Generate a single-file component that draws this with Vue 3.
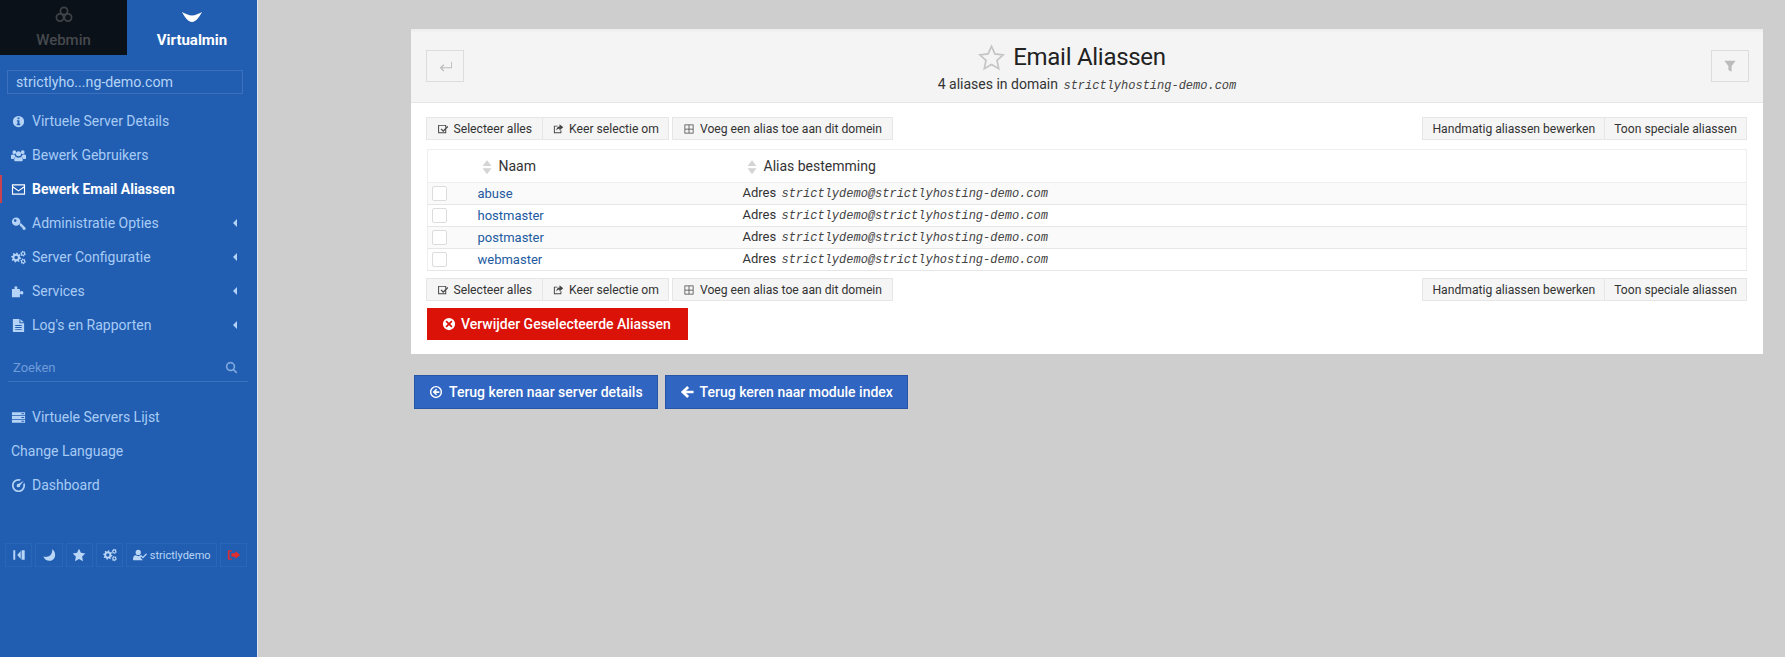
<script setup>
function gear(cx, cy, r, hole, teeth) {
  const n = teeth * 4
  const pts = []
  for (let k = 0; k < n; k++) {
    const a = (k / n) * Math.PI * 2 + Math.PI / n
    const rr = k % 4 < 2 ? r : r * 0.74
    pts.push((cx + rr * Math.cos(a)).toFixed(2) + ' ' + (cy + rr * Math.sin(a)).toFixed(2))
  }
  return 'M' + pts.join('L') + 'Z' +
    `M${cx - hole} ${cy}a${hole} ${hole} 0 1 0 ${hole * 2} 0a${hole} ${hole} 0 1 0 ${-hole * 2} 0Z`
}
const cogs = gear(5.5, 8, 5.4, 1.9, 8) + gear(12.9, 3.9, 3, 1.1, 6) + gear(12.9, 12.1, 3, 1.1, 6)
const P = {
  info: 'M8 2a6 6 0 1 0 0 12A6 6 0 0 0 8 2zM7 3.800h2v1.900H7zM6.300 6.600h2.700v3.900h.9v1.500H6.100v-1.500H7V8.100h-.7z',
  users: 'M3.500 2.500a2 2 0 1 1 0 4 2 2 0 0 1 0-4zM12.500 2.500a2 2 0 1 1 0 4 2 2 0 0 1 0-4zM8 3.500a2.700 2.700 0 1 1 0 5.400 2.700 2.700 0 0 1 0-5.400zM0 8.200C0 7.300 1 7 3.700 7c.3 1 .8 1.700 1.400 2.200C3.700 9.700 3 10.800 3 11.800H1c-.7 0-1-.4-1-1zM16 8.200c0-.9-1-1.200-3.700-1.200-.3 1-.8 1.700-1.400 2.200 1.400.5 2.100 1.600 2.100 2.600h2c.7 0 1-.4 1-1zM5.400 9.500c.7.500 1.600.8 2.600.8s1.900-.3 2.600-.8c1.500.3 2 1.500 2 3.200 0 1-.6 1.500-1.400 1.500H4.800c-.8 0-1.400-.5-1.400-1.500 0-1.700.5-2.900 2-3.200z',
  mail: 'M1 2.500h14v11H1zM2.200 6v6.300h11.600V6L8 10.200zM2.200 3.700v.8L8 8.800l5.800-4.300v-.8z',
  key: 'M5.500 1.500a4.500 4.500 0 1 1 0 9 4.500 4.500 0 0 1 0-9zM4.500 3.500a1.400 1.400 0 1 0 0 2.800 1.400 1.400 0 0 0 0-2.800zM9.200 8.700l1.200-1.200 5.100 5.100v2H13l-.8-.8.2-1.300-1.300-.2-.2-1.300-1.300-.2z',
  cogs,
  puzzle: 'M5 2.500c1.600 0 2.200 1 1.700 2-.3.500-.1.800.4.800h2.400v2.500c0 .5.400.7.800.3.900-.8 2.300-.7 2.700.4.200.6.200 1.200 0 1.800-.4 1.100-1.800 1.200-2.700.4-.4-.4-.8-.2-.8.3V14H1V5.300h2.400c.5 0 .7-.3.4-.8-.5-1 .2-2 1.200-2z',
  file: 'M2 1h7v4.500h5V15H2zM10 1.200L13.800 4.500H10zM4.500 7.500v1h7v-1zM4.500 9.700v1h7v-1zM4.500 11.900v1h7v-1z',
  search: 'M6.800 1a5.800 5.800 0 0 1 4.700 9.200l3.700 3.700-1.400 1.400-3.700-3.700A5.800 5.800 0 1 1 6.800 1zM6.800 3a3.800 3.800 0 1 0 0 7.600 3.800 3.800 0 0 0 0-7.600z',
  server: 'M1 2.500h14v3H1zM1 6.500h14v3H1zM1 10.500h14v3H1zM11 3.500v1h3v-1zM11 7.500v1h3v-1zM11 11.500v1h3v-1z',
  gauge: 'M8 1a7 7 0 1 0 7 7c0-1-.2-1.900-.6-2.700l-1.400 1.400c.1.400.2.800.2 1.300a5.200 5.200 0 1 1-5.200-5.200c.5 0 .9.100 1.300.2l1.400-1.400C9.900 1.200 9 1 8 1zM13.800 2.800L8.300 6.200a1.900 1.900 0 1 0 1.500 1.500z',
  cols: 'M1.500 2.500h2.200v11H1.500zM6 8l4-4.500v9zM11 2.500h3.500v11H11z',
  moon: 'M11.500 1.500c.8 4.200-1.500 8-6.200 8.600-1.300.2-2.700 0-3.800-.5 1.100 3 3.800 5 7 5 3.800 0 6.500-3 6.500-6.700 0-2.800-1.300-5-3.500-6.400z',
  star: 'M8 .8l2.200 4.700 5 .7-3.600 3.600.9 5.200L8 12.500 3.500 15l.9-5.200L.8 6.200l5-.7z',
  usercheck: 'M6 2a3 3 0 1 1 0 6 3 3 0 0 1 0-6zM1 14c-.6 0-1-.4-1-1 0-2.500 1-4.600 3.300-4.600.8.600 1.700.9 2.700.9s1.900-.3 2.700-.9c.5 0 1 .1 1.400.3L8.500 11l2.800 3zM15 6l1 1-4.700 5L8.800 9.500l1-1 1.500 1.500z',
  signout: 'M5.500 2.500H2.500C1.500 2.500 1 3.200 1 4v8c0 .8.500 1.500 1.500 1.500h3V12H2.800V4h2.700zM9.500 3.500L15 8l-5.500 4.500V10H5V6h4.500z',
  checkbox: 'M1.500 2.500h10.800v2.700l-1.300 1.300V3.800H2.800v8.400H11V9.300l1.300-1.300v5.500H1.500zM13.800 4l1.200 1.200-6.700 6.700-3.500-3.500 1.200-1.200 2.300 2.300z',
  share: 'M2.500 3.500h5v1.300H3.800v7.400h7.400V9.800h1.300v3.700h-10zM10 1.500L15 5.800l-5 4.200V7.700c-2 0-3.500.7-4.300 2.500 0-3.200 1.700-5.700 4.300-5.700z',
  plus: 'M2 2h12v12H2zM3 3v4.500h4.500V3zM8.500 3v4.500H13V3zM3 8.500V13h4.500V8.500zM8.500 8.500V13H13V8.500z',
  xcircle: 'M8 1a7 7 0 1 0 0 14A7 7 0 0 0 8 1zM5.400 4L8 6.600 10.600 4 12 5.400 9.400 8l2.600 2.600L10.600 12 8 9.400 5.400 12 4 10.600 6.600 8 4 5.400z',
  backc: 'M8 1a7 7 0 1 0 0 14A7 7 0 0 0 8 1zM8 2.700a5.300 5.300 0 1 1 0 10.600A5.300 5.300 0 0 1 8 2.700zM8 4.200L4.200 8 8 11.800 9.300 10.500 7.800 9H11.800V7H7.800l1.500-1.500z',
  left: 'M8.200 1.200L10.400 3.400 7 6.500H15.500v3H7l3.400 3.100-2.200 2.200L1 8z',
  filter: 'M1.500 2h13L9.800 8v6.500L6.200 12.500V8z',
  enter: 'M15 3v6.300H4.800l2.400-2.300-1-1L2 10l4.200 4.200 1-1-2.400-2.500H16V3z'
}
const menu = [
  { t: 'Virtuele Server Details', i: 'info' },
  { t: 'Bewerk Gebruikers', i: 'users' },
  { t: 'Bewerk Email Aliassen', i: 'mail', active: true },
  { t: 'Administratie Opties', i: 'key', more: true },
  { t: 'Server Configuratie', i: 'cogs', more: true },
  { t: 'Services', i: 'puzzle', more: true },
  { t: "Log's en Rapporten", i: 'file', more: true }
]
const lower = [
  { t: 'Virtuele Servers Lijst', i: 'server' },
  { t: 'Change Language' },
  { t: 'Dashboard', i: 'gauge' }
]
const rows = ['abuse', 'hostmaster', 'postmaster', 'webmaster']
const dest = 'strictlydemo@strictlyhosting-demo.com'
</script>

<template>
  <div class="page">
    <aside class="side">
      <div class="tabs">
        <div class="tab dark">
          <svg class="tabicon" viewBox="0 0 18 18"><g fill="none" stroke="#3f4348" stroke-width="1.700"><circle cx="9" cy="5" r="3.600"/><circle cx="5" cy="11.500" r="3.600"/><circle cx="13" cy="11.500" r="3.600"/></g></svg>
          <span>Webmin</span>
        </div>
        <div class="tab on">
          <svg class="chev" viewBox="0 0 20 10"><path fill="#fff" d="M0 0c3 1.500 7 3.500 10 3.500S17 1.500 20 0c-2 4-6 10-10 10S2 4 0 0z"/></svg>
          <span>Virtualmin</span>
        </div>
      </div>
      <div class="domain">strictlyho...ng-demo.com</div>
      <nav class="menu">
        <a v-for="m in menu" :key="m.t" class="item" :class="{ active: m.active }">
          <svg class="ic" viewBox="0 0 16 16"><path fill-rule="evenodd" :d="P[m.i]"/></svg>
          <span class="lbl">{{ m.t }}</span>
          <i v-if="m.more" class="caret"></i>
        </a>
      </nav>
      <div class="search">
        <span>Zoeken</span>
        <svg class="sic" viewBox="0 0 16 16"><path fill-rule="evenodd" :d="P.search"/></svg>
      </div>
      <nav class="menu lowermenu">
        <a v-for="m in lower" :key="m.t" class="item">
          <svg v-if="m.i" class="ic" viewBox="0 0 16 16"><path fill-rule="evenodd" :d="P[m.i]"/></svg>
          <span class="lbl">{{ m.t }}</span>
        </a>
      </nav>
      <div class="tools">
        <span class="tool w1"><svg viewBox="0 0 16 16"><path fill-rule="evenodd" :d="P.cols"/></svg></span>
        <span class="tool w1"><svg viewBox="0 0 16 16"><path :d="P.moon"/></svg></span>
        <span class="tool w1"><svg viewBox="0 0 16 16"><path :d="P.star"/></svg></span>
        <span class="tool w1"><svg viewBox="0 0 16 16"><path fill-rule="evenodd" :d="P.cogs"/></svg></span>
        <span class="tool user"><svg viewBox="0 0 16 16"><path :d="P.usercheck"/></svg>strictlydemo</span>
        <span class="tool w1 red"><svg viewBox="0 0 16 16"><path :d="P.signout"/></svg></span>
      </div>
    </aside>

    <main class="main">
      <section class="panel">
        <header class="head">
          <span class="sq"><svg viewBox="0 0 16 16"><path :d="P.enter"/></svg></span>
          <div class="titles">
            <h1>
              <svg class="star" viewBox="0 0 24 24"><path fill="none" stroke="#c4c4c4" stroke-width="1.500" d="M12 2l3 6.800 7.400.8-5.500 5 1.500 7.300L12 18.300l-6.400 3.600 1.500-7.300-5.500-5 7.400-.8z"/></svg>
              Email Aliassen
            </h1>
            <p>4 aliases in domain <code>strictlyhosting-demo.com</code></p>
          </div>
          <span class="sq"><svg viewBox="0 0 16 16"><path :d="P.filter"/></svg></span>
        </header>
        <div class="body">
          <div class="bar">
            <div class="grp">
              <button><svg viewBox="0 0 16 16"><path :d="P.checkbox"/></svg>Selecteer alles</button>
              <button><svg viewBox="0 0 16 16"><path :d="P.share"/></svg>Keer selectie om</button>
            </div>
            <div class="grp"><button><svg viewBox="0 0 16 16"><path fill-rule="evenodd" :d="P.plus"/></svg>Voeg een alias toe aan dit domein</button></div>
            <div class="grp right">
              <button>Handmatig aliassen bewerken</button>
              <button>Toon speciale aliassen</button>
            </div>
          </div>
          <table>
            <thead>
              <tr>
                <th class="c1"></th>
                <th class="c2"><i class="sort"></i>Naam</th>
                <th><i class="sort"></i>Alias bestemming</th>
              </tr>
            </thead>
            <tbody>
              <tr v-for="r in rows" :key="r">
                <td class="c1"><span class="cb"></span></td>
                <td class="c2"><a>{{ r }}</a></td>
                <td>Adres <code>{{ dest }}</code></td>
              </tr>
            </tbody>
          </table>
          <div class="bar bar2">
            <div class="grp">
              <button><svg viewBox="0 0 16 16"><path :d="P.checkbox"/></svg>Selecteer alles</button>
              <button><svg viewBox="0 0 16 16"><path :d="P.share"/></svg>Keer selectie om</button>
            </div>
            <div class="grp"><button><svg viewBox="0 0 16 16"><path fill-rule="evenodd" :d="P.plus"/></svg>Voeg een alias toe aan dit domein</button></div>
            <div class="grp right">
              <button>Handmatig aliassen bewerken</button>
              <button>Toon speciale aliassen</button>
            </div>
          </div>
          <button class="del"><svg viewBox="0 0 16 16"><path fill-rule="evenodd" :d="P.xcircle"/></svg>Verwijder Geselecteerde Aliassen</button>
        </div>
      </section>
      <div class="back">
        <button><svg viewBox="0 0 16 16"><path fill-rule="evenodd" :d="P.backc"/></svg>Terug keren naar server details</button>
        <button><svg viewBox="0 0 16 16"><path :d="P.left"/></svg>Terug keren naar module index</button>
      </div>
    </main>
  </div>
</template>

<style>
html, body { margin: 0; background: #cecece; }
</style>

<style scoped>
.page { display: flex; width: 1785px; height: 657px; overflow: hidden; font-family: Roboto, "Liberation Sans", sans-serif; background: #cecece; }
.side { width: 257px; flex: none; background: #215eb1; box-shadow: 1px 0 0 #dde6f1; color: #a8cbf5; display: flex; flex-direction: column; }
.tabs { display: flex; height: 55px; }
.tab { width: 127px; display: flex; flex-direction: column; align-items: center; font-weight: 500; font-size: 15px; line-height: 18px; color: #fff; }
.tab.on { flex: 1; font-weight: 700; }
.tab.dark { background: #0b1119; color: #46494e; }
.tabicon { width: 18px; height: 18px; margin-top: 6px; margin-bottom: 7px; }
.chev { width: 20px; height: 10px; margin-top: 12px; margin-bottom: 9px; }
.domain { margin: 15px 14px 0 7px; height: 22px; line-height: 22px; padding-left: 8px; border: 1px solid #3a70bd; font-size: 14.200px; color: #b5d3f7; }
.menu { display: flex; flex-direction: column; margin-top: 10px; }
.item { height: 34px; display: flex; align-items: center; position: relative; font-size: 14px; padding-left: 11px; }
.item .ic { width: 15px; height: 15px; fill: #b5d3f7; margin-right: 6px; flex: none; }
.item.active { color: #fff; font-weight: 700; }
.item.active .ic { fill: #fff; }
.item.active::before { content: ""; position: absolute; left: 0; top: 3px; bottom: 3px; width: 2px; background: #c8434d; }
.caret { position: absolute; left: 233px; top: 13px; border: 4px solid transparent; border-left: 0; border-right: 4px solid #b5d3f7; }
.search { margin: 12px 9px 0 8px; height: 27px; padding: 0 10px 0 5px; display: flex; align-items: center; justify-content: space-between; font-size: 13px; color: #6f9bd9; border-bottom: 1px solid #3a72c0; }
.sic { width: 13px; height: 13px; fill: #7fa8e0; }
.lowermenu { margin-top: 18px; }
.tools { display: flex; gap: 3px; margin: 41px 0 0 5px; height: 24px; }
.tool { width: 27.300px; height: 24px; display: flex; align-items: center; justify-content: center; border: 1px solid #2a66b8; box-sizing: border-box; color: #bad6f7; fill: #bad6f7; font-size: 11px; }
.tool svg { width: 14px; height: 14px; flex: none; }
.tool.user { width: 91px; gap: 3px; }
.tool.red { fill: #e52c2c; }
.main { flex: 1; padding: 29px 22px 0 154px; }
.panel { background: #fff; }
.head { height: 74px; background: linear-gradient(#ececec 0, #f4f4f4 4px); border-bottom: 1px solid #e6e6e6; box-sizing: border-box; padding: 21px 14px 0 15px; display: flex; justify-content: space-between; align-items: flex-start; position: relative; }
.sq { width: 38px; height: 32px; border: 1px solid #dcdcdc; box-sizing: border-box; display: flex; align-items: center; justify-content: center; }
.sq svg { width: 14px; height: 14px; fill: #bbb; }
.titles { position: absolute; left: 0; right: 0; top: 14px; text-align: center; }
h1 { margin: 0; font-weight: 400; font-size: 24px; letter-spacing: -.28px; line-height: 28px; color: #222; display: flex; justify-content: center; align-items: center; gap: 8px; padding-right: 30px; }
.star { width: 27px; height: 27px; }
p { margin: 5px 0 0; font-size: 14px; line-height: 16px; color: #333; }
code { font-family: "Liberation Mono", monospace; font-style: italic; font-size: 12px; color: #444; margin-left: 2px; }
.body { padding: 14px 16px 14px; }
.bar { display: flex; gap: 4px; height: 23px; }
.bar2 { margin-top: 7px; }
.grp { display: flex; }
.right { margin-left: auto; }
button { font-family: inherit; cursor: pointer; }
.grp button { height: 23px; box-sizing: border-box; background: #f5f5f5; border: 1px solid #e6e6e6; color: #333; font-size: 12.150px; padding: 0 9.500px; display: flex; align-items: center; gap: 5px; margin-left: -1px; }
.right button { padding: 0 9px; }
.grp button svg { width: 12px; height: 12px; fill: #444; }
table { width: 100%; border-collapse: collapse; margin-top: 9px; font-size: 13px; color: #333; table-layout: fixed; }
th { height: 33px; box-sizing: border-box; text-align: left; font-weight: 400; font-size: 14px; color: #333; border: 1px solid #eee; border-left: 0; border-right: 0; padding: 0 0 0 5px; }
th:first-child, td:first-child { border-left: 1px solid #eee; }
th:last-child, td:last-child { border-right: 1px solid #eee; }
.c1 { width: 50px; padding: 0 0 0 4px; box-sizing: border-box; }
.c2 { width: 265px; }
td { height: 22px; box-sizing: border-box; padding: 0 0 1px; border-bottom: 1px solid #e6e6e6; }
tbody tr:nth-child(odd) { background: #fafafa; }
td a { color: #225a9f; }
.sort { display: inline-block; width: 9px; height: 14px; margin-right: 7px; vertical-align: middle; background: #d4d4d4; clip-path: polygon(50% 0, 100% 42%, 0 42%, 50% 0, 50% 58%, 100% 58%, 50% 100%, 0 58%, 50% 58%); }
.cb { display: block; width: 13px; height: 13px; border: 1px solid #dcdcdc; border-radius: 2px; background: #fff; }
.del { display: flex; align-items: center; gap: 5px; margin-top: 7px; height: 32px; width: 261px; border: 0; background: #db1208; color: #fff; font-size: 14px; font-weight: 500; padding: 0 0 0 15px; }
.del svg { width: 14px; height: 14px; fill: #fff; }
.back { display: flex; gap: 7px; margin: 21px 0 0 3px; }
.back button { height: 34px; background: #3065c2; color: #fff; border: 1px solid #2655a8; font-size: 14px; font-weight: 500; padding: 0 14px; display: flex; align-items: center; gap: 6px; }
.back button svg { width: 14px; height: 14px; fill: #fff; }
</style>
